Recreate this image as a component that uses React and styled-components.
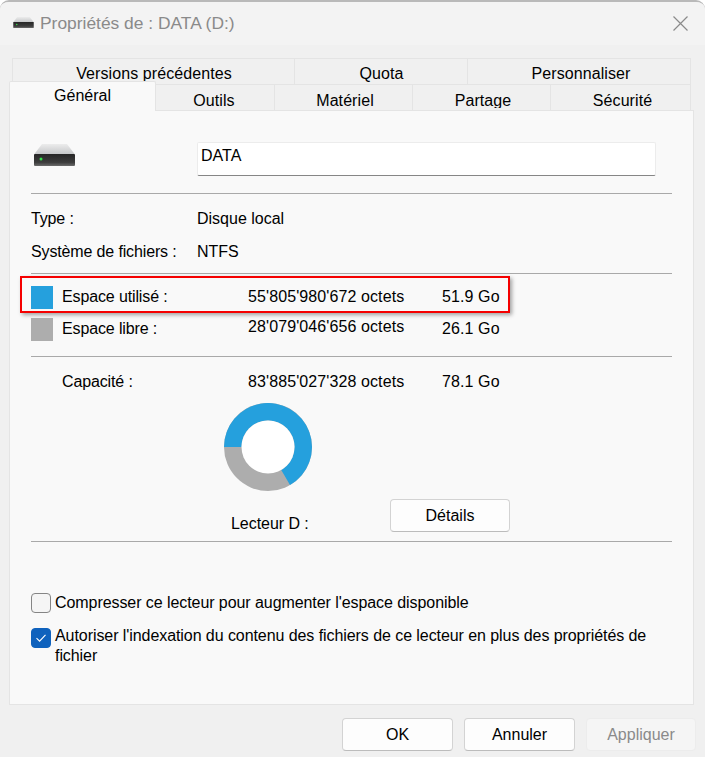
import React from "react";
import styled, { createGlobalStyle } from "styled-components";

const GlobalStyle = createGlobalStyle`
  html, body {
    margin: 0;
    padding: 0;
    background: #ffffff;
  }
  * {
    box-sizing: border-box;
  }
`;

const firstTabs = [
  { label: "Versions précédentes", width: 283 },
  { label: "Quota", width: 174 },
  { label: "Personnaliser", width: 224, pad: 4 },
];

const secondTabs = [
  { label: "Outils", width: 120, padRight: 3 },
  { label: "Matériel", width: 139, pad: 3 },
  { label: "Partage", width: 139, pad: 3 },
  { label: "Sécurité", width: 141, pad: 4 },
];

// petit disque, repris dans le titre et dans le panneau
const DriveIcon = ({ width, height }) => (
  <svg width={width} height={height} viewBox="0 0 41 22">
    <defs>
      <linearGradient id="driveTop" x1="0" y1="0" x2="0" y2="1">
        <stop offset="0" stopColor="#ececec" />
        <stop offset="1" stopColor="#c4c6c8" />
      </linearGradient>
      <linearGradient id="driveBody" x1="0" y1="0" x2="0" y2="1">
        <stop offset="0" stopColor="#262626" />
        <stop offset="0.7" stopColor="#3d3d3d" />
        <stop offset="1" stopColor="#6b6b6b" />
      </linearGradient>
    </defs>
    <path d="M8 0H33L41 10.5H0Z" fill="url(#driveTop)" />
    <rect x="0" y="10" width="41" height="12" rx="1" fill="url(#driveBody)" />
    <rect x="5.5" y="13.5" width="3" height="3" rx="1.5" fill="#35e04a" />
  </svg>
);

const UsageDonut = () => (
  <svg width="88" height="88" viewBox="-44 -44 88 88">
    <circle r="44" fill="#adadad" />
    <path d="M-44 0A44 44 0 1 1 22 38.1L13.25 22.95A26.5 26.5 0 1 0 -26.5 0Z" fill="#25a0dd" />
    <circle r="26.5" fill="#ffffff" />
  </svg>
);

export default function App() {
  return (
    <Window>
      <GlobalStyle />
      <TitleBar>
        <TitleIcon>
          <DriveIcon width={21} height={11} />
        </TitleIcon>
        <Title>Propriétés de : DATA (D:)</Title>
        <CloseIcon width="15" height="15" viewBox="0 0 15 15">
          <path d="M0.5 0.5L14.5 14.5M14.5 0.5L0.5 14.5" stroke="#8a8a8a" strokeWidth="1.2" fill="none" />
        </CloseIcon>
      </TitleBar>

      <Body>
        <TabRowTop>
          {firstTabs.map((tab) => (
            <Tab key={tab.label} $width={tab.width} $pad={tab.pad}>{tab.label}</Tab>
          ))}
        </TabRowTop>
        <TabRowBottom>
          <ActiveTab>Général</ActiveTab>
          {secondTabs.map((tab) => (
            <Tab key={tab.label} $width={tab.width} $pad={tab.pad} $padRight={tab.padRight}>
              <ClippedLabel>{tab.label}</ClippedLabel>
            </Tab>
          ))}
        </TabRowBottom>

        <Panel>
          <NameRow>
            <DriveSlot>
              <DriveIcon width={41} height={22} />
            </DriveSlot>
            <NameField>DATA</NameField>
          </NameRow>
          <Divider $top={17} />

          <InfoRow $first>
            <InfoLabel>Type :</InfoLabel>
            <span>Disque local</span>
          </InfoRow>
          <InfoRow>
            <InfoLabel>Système de fichiers :</InfoLabel>
            <span>NTFS</span>
          </InfoRow>
          <Divider $top={5} />

          <SpaceRow $top={12}>
            <Swatch $color="#25a0dd" />
            <SpaceLabel>Espace utilisé :</SpaceLabel>
            <SpaceValue>55'805'980'672 octets</SpaceValue>
            <SpaceValue>51.9 Go</SpaceValue>
            <Highlight />
          </SpaceRow>
          <SpaceRow $top={9}>
            <Swatch $color="#adadad" />
            <SpaceLabel>Espace libre :</SpaceLabel>
            <SpaceValue $shift={-3}>28'079'046'656 octets</SpaceValue>
            <SpaceValue>26.1 Go</SpaceValue>
          </SpaceRow>
          <Divider $top={15} />

          <SpaceRow $top={14}>
            <span />
            <SpaceLabel>Capacité :</SpaceLabel>
            <SpaceValue>83'885'027'328 octets</SpaceValue>
            <SpaceValue>78.1 Go</SpaceValue>
          </SpaceRow>

          <DonutSlot>
            <UsageDonut />
          </DonutSlot>
          <DriveRow>
            <DriveLabel>Lecteur D :</DriveLabel>
            <DetailsButton>Détails</DetailsButton>
          </DriveRow>
          <Divider $top={9} />

          <CheckRow $top={51}>
            <CheckBox />
            <CheckText>Compresser ce lecteur pour augmenter l'espace disponible</CheckText>
          </CheckRow>
          <CheckRow $top={15}>
            <CheckBox $checked>
              <svg width="12" height="10" viewBox="0 0 12 10">
                <path d="M1.5 5.2L4.6 8.2L10.5 1.8" stroke="#ffffff" strokeWidth="1.1" fill="none" />
              </svg>
            </CheckBox>
            <CheckText $raised>
              Autoriser l'indexation du contenu des fichiers de ce lecteur en plus des propriétés de fichier
            </CheckText>
          </CheckRow>
        </Panel>

        <Footer>
          <FooterButton>OK</FooterButton>
          <FooterButton>Annuler</FooterButton>
          <FooterButton $disabled>Appliquer</FooterButton>
        </Footer>
      </Body>
    </Window>
  );
}

const Window = styled.div`
  width: 705px;
  height: 757px;
  display: flex;
  flex-direction: column;
  overflow: hidden;
  background: #f0f0f0;
  border-top: 2px solid #b9b9b9;
  border-radius: 9px 9px 0 0;
  font-family: "Liberation Sans", Arial, sans-serif;
  font-size: 16px;
  color: #000000;
`;

const TitleBar = styled.div`
  height: 43px;
  flex: none;
  display: flex;
  align-items: center;
  padding: 0 17px 0 13px;
  background: #f3f3f3;
`;

const TitleIcon = styled.div`
  display: flex;
  margin: 0 6px 2px 0;
`;

const Title = styled.div`
  flex: 1;
  font-size: 17.4px;
  color: #8a8a8a;
`;

const CloseIcon = styled.svg`
  display: block;
`;

const Body = styled.div`
  flex: 1;
  display: flex;
  flex-direction: column;
  padding-top: 13px;
`;

const TabRowTop = styled.div`
  display: flex;
  height: 26px;
  margin-left: 12px;
`;

const TabRowBottom = styled.div`
  display: flex;
  align-items: flex-end;
  height: 26px;
  margin-left: 9px;
`;

const Tab = styled.div`
  width: ${(p) => p.$width}px;
  height: 26px;
  display: flex;
  align-items: center;
  justify-content: center;
  padding: 5px ${(p) => p.$padRight ?? 0}px 0 ${(p) => p.$pad ?? 1}px;
  letter-spacing: 0.08px;
  background: #f0f0f0;
  border: 1px solid #e4e4e4;
  border-bottom: 0;
  margin-left: -1px;
  &:first-child {
    margin-left: 0;
  }
`;

// le bas des libellés est coupé dans la deuxième rangée
const ClippedLabel = styled.span`
  display: block;
  height: 16px;
  overflow: hidden;
`;

const ActiveTab = styled.div`
  position: relative;
  z-index: 1;
  width: 147px;
  height: 30px;
  margin-bottom: -1px;
  display: flex;
  align-items: center;
  justify-content: center;
  padding-bottom: 2px;
  background: #f9f9f9;
  border: 1px solid #e4e4e4;
  border-bottom: 0;
  border-radius: 2px 2px 0 0;
`;

const Panel = styled.div`
  width: 685px;
  height: 595px;
  margin-left: 9px;
  padding: 31px 21px 0 21px;
  background: #f9f9f9;
  border: 1px solid #e4e4e4;
`;

const NameRow = styled.div`
  display: flex;
  align-items: center;
  height: 34px;
`;

const DriveSlot = styled.div`
  width: 166px;
  padding-left: 3px;
  padding-bottom: 8px;
  display: flex;
`;

const NameField = styled.div`
  width: 459px;
  height: 34px;
  padding: 4px 0 0 3px;
  background: #ffffff;
  border: 1px solid #ececec;
  border-bottom: 1px solid #868686;
  border-radius: 2px;
`;

const Divider = styled.div`
  height: 1px;
  margin-top: ${(p) => p.$top}px;
  background: #a9a9a9;
`;

const InfoRow = styled.div`
  display: grid;
  grid-template-columns: 166px 1fr;
  align-items: center;
  height: 33px;
  margin-top: ${(p) => (p.$first ? 8 : 0)}px;
`;

const InfoLabel = styled.span`
  letter-spacing: -0.14px;
`;

const SpaceRow = styled.div`
  position: relative;
  display: grid;
  grid-template-columns: 31px 186px 194px 1fr;
  align-items: center;
  height: 23px;
  margin-top: ${(p) => p.$top}px;
`;

const Swatch = styled.div`
  width: 22px;
  height: 23px;
  background: ${(p) => p.$color};
`;

const SpaceLabel = styled.div`
  letter-spacing: -0.13px;
  transform: translateY(-1px);
`;

const SpaceValue = styled.div`
  letter-spacing: 0.1px;
  transform: translateY(${(p) => p.$shift ?? -1}px);
`;

const Highlight = styled.div`
  position: absolute;
  left: -11px;
  top: -10px;
  width: 490px;
  height: 37px;
  border: 2px solid #f50000;
  box-shadow: 2px 2px 4px rgba(0, 0, 0, 0.35);
`;

const DonutSlot = styled.div`
  display: flex;
  margin: 9px 0 0 193px;
`;

const DriveRow = styled.div`
  display: flex;
  align-items: flex-end;
  height: 33px;
  margin-top: 8px;
`;

const DriveLabel = styled.div`
  width: 159px;
  margin: 0 0 -2px 200px;
  line-height: 20px;
  letter-spacing: -0.05px;
`;

const DetailsButton = styled.div`
  width: 120px;
  height: 33px;
  display: flex;
  align-items: center;
  justify-content: center;
  background: #fdfdfd;
  border: 1px solid #d3d3d3;
  border-bottom-color: #bcbcbc;
  border-radius: 4px;
`;

const CheckRow = styled.div`
  display: flex;
  align-items: flex-start;
  gap: 4px;
  margin-top: ${(p) => p.$top}px;
`;

const CheckBox = styled.div`
  flex: none;
  width: 20px;
  height: 20px;
  display: flex;
  align-items: center;
  justify-content: center;
  border-radius: 4px;
  background: ${(p) => (p.$checked ? "#0f62bd" : "#f5f5f5")};
  border: 1px solid ${(p) => (p.$checked ? "#0f62bd" : "#858585")};
`;

const CheckText = styled.div`
  width: 600px;
  line-height: 20px;
  letter-spacing: -0.07px;
  margin-top: ${(p) => (p.$raised ? -2 : 0)}px;
`;

const Footer = styled.div`
  display: flex;
  justify-content: flex-end;
  gap: 11px;
  padding: 13px 9px 0 0;
`;

const FooterButton = styled.div`
  width: ${(p) => (p.$disabled ? 110 : 111)}px;
  height: 33px;
  display: flex;
  align-items: center;
  justify-content: center;
  border-radius: 4px;
  background: ${(p) => (p.$disabled ? "#f5f5f5" : "#fdfdfd")};
  color: ${(p) => (p.$disabled ? "#8a8a8a" : "#000000")};
  border: 1px solid ${(p) => (p.$disabled ? "#ececec" : "#d3d3d3")};
  border-bottom-color: ${(p) => (p.$disabled ? "#ececec" : "#bcbcbc")};
`;
